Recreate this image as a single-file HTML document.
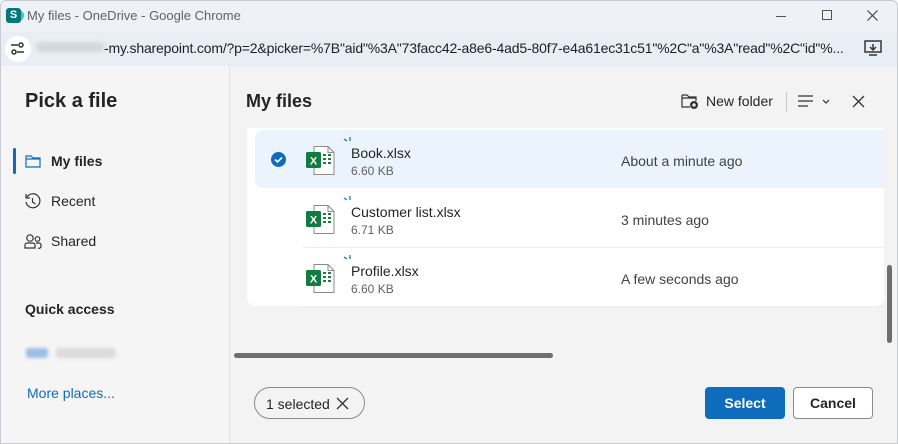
<!DOCTYPE html>
<html><head><style>
*{margin:0;padding:0;box-sizing:border-box}
body{width:898px;height:444px;overflow:hidden;font-family:"Liberation Sans",Arial,sans-serif;background:#fff;position:relative}
.abs{position:absolute}
.title{left:0;top:0;width:898px;height:32px;background:#eef1f5;border:1px solid #c8ccd2;border-bottom:none;border-radius:6px 6px 0 0}
.addr{left:0;top:32px;width:898px;height:34px;background:#e9eef6;border-left:1px solid #c8ccd2;border-right:1px solid #c8ccd2}
.side{left:0;top:66px;width:230px;height:378px;background:#f5f5f5;border-right:1px solid #e3e3e3;border-left:1px solid #c8ccd2}
.main{left:230px;top:66px;width:668px;height:378px;background:#f3f3f3;border-right:1px solid #c8ccd2}
.t{font-size:14px;color:#242424;white-space:nowrap}
.s{font-size:12px;color:#616161}
</style></head><body>
<div class="abs title"></div>
<div class="abs" style="left:16px;top:10px;width:8px;height:11px;background:#37c6d0;border-radius:0 6px 6px 0"></div>
<div class="abs" style="left:6px;top:8px;width:15px;height:15px;background:#03787c;border-radius:3px;color:#fff;font-size:11px;font-weight:bold;text-align:center;line-height:15px">S</div>
<div class="abs t" style="left:27px;top:8px;font-size:13px;color:#5f6368">My files - OneDrive - Google Chrome</div>
<div class="abs" style="left:776px;top:16px;width:10px;height:1px;background:#555"></div>
<div class="abs" style="left:822px;top:10px;width:10px;height:10px;border:1px solid #555"></div>
<svg class="abs" style="left:867px;top:10px" width="11" height="11"><path d="M0.5 0.5l10 10M10.5 0.5l-10 10" stroke="#444" stroke-width="1.2"/></svg>
<div class="abs addr"></div>
<div class="abs" style="left:5px;top:36px;width:26px;height:26px;background:#fff;border-radius:50%"></div>
<svg class="abs" style="left:10px;top:42px" width="16" height="14"><line x1="1" y1="3" x2="8" y2="3" stroke="#333" stroke-width="1.5"/><circle cx="11" cy="3" r="2" fill="none" stroke="#333" stroke-width="1.5"/><circle cx="4" cy="10" r="2" fill="none" stroke="#333" stroke-width="1.5"/><line x1="7" y1="10" x2="14" y2="10" stroke="#333" stroke-width="1.5"/></svg>
<div class="abs" style="left:36px;top:42px;width:68px;height:10px;background:#d3d6dc;border-radius:4px;filter:blur(2px)"></div>
<div class="abs t" style="left:104px;top:40px;font-size:14px;color:#202124;letter-spacing:-0.17px">-my.sharepoint.com/?p=2&amp;picker=%7B"aid"%3A"73facc42-a8e6-4ad5-80f7-e4a61ec31c51"%2C"a"%3A"read"%2C"id"%...</div>
<svg class="abs" style="left:864px;top:40px" width="18" height="16"><rect x="1" y="1" width="16" height="11" fill="none" stroke="#333" stroke-width="1.5"/><path d="M9 4v6M6 7l3 3 3-3M5 15h8" stroke="#333" fill="none" stroke-width="1.5"/></svg>
<div class="abs side"></div>
<div class="abs main"></div>
<div class="abs t" style="left:25px;top:90px;font-size:20px;font-weight:bold">Pick a file</div>
<div class="abs" style="left:13px;top:148px;width:3px;height:26px;background:#0f6cbd;border-radius:2px"></div>
<svg class="abs" style="left:25px;top:154px" width="16" height="14"><path d="M1 2h5l2 2h7v9H1z" fill="none" stroke="#0f6cbd" stroke-width="1.2"/><line x1="1" y1="5" x2="15" y2="5" stroke="#0f6cbd" stroke-width="1.2"/></svg>
<div class="abs t" style="left:51px;top:153px;font-weight:bold">My files</div>
<svg class="abs" style="left:24px;top:193px" width="17" height="17"><path d="M3 4A7 7 0 1 1 2 9" fill="none" stroke="#333" stroke-width="1.2"/><path d="M2 1v4h4M8.5 5v4l3 2" fill="none" stroke="#333" stroke-width="1.2"/></svg>
<div class="abs t" style="left:51px;top:193px">Recent</div>
<svg class="abs" style="left:24px;top:233px" width="18" height="17"><circle cx="6" cy="5" r="3.2" fill="none" stroke="#333" stroke-width="1.2"/><circle cx="13.5" cy="6" r="2.3" fill="none" stroke="#333" stroke-width="1.2"/><path d="M1 15v-3a2 2 0 0 1 2-2h6a2 2 0 0 1 2 2v3zM12 10h3a2 2 0 0 1 2 2v1a2 2 0 0 1-3 2" fill="none" stroke="#333" stroke-width="1.2"/></svg>
<div class="abs t" style="left:51px;top:233px">Shared</div>
<div class="abs t" style="left:25px;top:301px;font-weight:bold;font-size:14px">Quick access</div>
<div class="abs" style="left:26px;top:348px;width:22px;height:10px;background:#9ebde6;border-radius:3px;filter:blur(1.5px)"></div>
<div class="abs" style="left:56px;top:348px;width:60px;height:10px;background:#dcdcdc;border-radius:3px;filter:blur(1.5px)"></div>
<div class="abs t" style="left:27px;top:385px;color:#0f6cbd">More places...</div>
<div class="abs t" style="left:246px;top:91px;font-size:18px;font-weight:bold">My files</div>
<svg class="abs" style="left:681px;top:93px" width="18" height="17"><path d="M1 2h5l2 2h7v4M9 14H1V2M1 5h14" fill="none" stroke="#333" stroke-width="1.2"/><circle cx="13" cy="12" r="4" fill="#333"/><path d="M13 10v4M11 12h4" stroke="#fff" stroke-width="1.2"/></svg>
<div class="abs t" style="left:706px;top:93px">New folder</div>
<div class="abs" style="left:786px;top:92px;width:1px;height:20px;background:#ccc"></div>
<svg class="abs" style="left:798px;top:95px" width="34" height="14"><path d="M0 1h15M0 6h15M0 11h10M25 5l3 3 3-3" stroke="#333" fill="none" stroke-width="1.2"/></svg>
<svg class="abs" style="left:852px;top:95px" width="13" height="13"><path d="M1 1l11 11M12 1L1 12" stroke="#333" stroke-width="1.3"/></svg>
<div class="abs" style="left:247px;top:128px;width:637px;height:178px;background:#fff;border-radius:0 0 8px 8px"></div>
<div class="abs" style="left:255px;top:130px;width:629px;height:58px;background:#ebf3fc;border-radius:8px 0 0 8px"></div>
<div class="abs" style="left:303px;top:247px;width:581px;height:1px;background:#ededed"></div>
<div class="abs" style="left:303px;top:306px;width:581px;height:1px;background:#ededed"></div>
<div class="abs" style="left:271px;top:152px;width:15px;height:15px;border-radius:50%;background:#0f6cbd"></div>
<svg class="abs" style="left:271px;top:152px" width="15" height="15"><path d="M4 7.5l2.5 2.5 4.5-4.5" stroke="#fff" stroke-width="1.6" fill="none"/></svg>
<div id="rows"></div>
<script>
var r=[["Book.xlsx","6.60 KB","About a minute ago",145],["Customer list.xlsx","6.71 KB","3 minutes ago",204],["Profile.xlsx","6.60 KB","A few seconds ago",263]],h="";
r.forEach(function(a){var y=a[3];
h+='<svg class="abs" style="left:305px;top:'+y+'px" width="32" height="32"><path d="M9 1.5h14l6 6v22H9z" fill="#fff" stroke="#8a8a8a"/><path d="M23 1.5v6h6" fill="none" stroke="#8a8a8a"/><rect x="1" y="7" width="15" height="16" rx="1.5" fill="#107c41"/><text x="8.5" y="19.5" font-size="11" font-weight="bold" fill="#fff" text-anchor="middle" font-family="Liberation Sans">X</text><path d="M18 10h3M23 10h3M18 14h3M23 14h3M18 18h3M23 18h3" stroke="#1f7a45" stroke-width="2"/></svg>';
h+='<svg class="abs" style="left:343px;top:'+(y-8)+'px" width="10" height="8"><path d="M1 2l3 2M7 0v4" stroke="#0f6cbd" stroke-width="1.2"/></svg>';
h+='<div class="abs t" style="left:351px;top:'+(y)+'px">'+a[0]+'</div><div class="abs s" style="left:351px;top:'+(y+19)+'px">'+a[1]+'</div><div class="abs t" style="left:621px;top:'+(y+8)+'px;color:#424242">'+a[2]+'</div>';});
document.getElementById('rows').innerHTML=h;
</script>
<div class="abs" style="left:887px;top:265px;width:5px;height:78px;background:#6e6e6e;border-radius:3px"></div>
<div class="abs" style="left:234px;top:353px;width:319px;height:5px;background:#6e6e6e;border-radius:3px"></div>
<div class="abs" style="left:254px;top:387px;width:111px;height:32px;border:1px solid #8a8a8a;border-radius:16px"></div>
<div class="abs t" style="left:266px;top:396px">1 selected</div>
<svg class="abs" style="left:336px;top:397px" width="13" height="13"><path d="M1 1l11 11M12 1L1 12" stroke="#333" stroke-width="1.3"/></svg>
<div class="abs" style="left:705px;top:387px;width:80px;height:32px;background:#0f6cbd;border-radius:4px;color:#fff;font-size:14px;font-weight:bold;text-align:center;line-height:32px">Select</div>
<div class="abs" style="left:793px;top:387px;width:80px;height:32px;background:#fff;border:1px solid #8a8a8a;border-radius:4px;color:#242424;font-size:14px;font-weight:bold;text-align:center;line-height:30px">Cancel</div>
<div class="abs" style="left:0;top:443px;width:898px;height:1px;background:#c8ccd2"></div>
</body></html>
